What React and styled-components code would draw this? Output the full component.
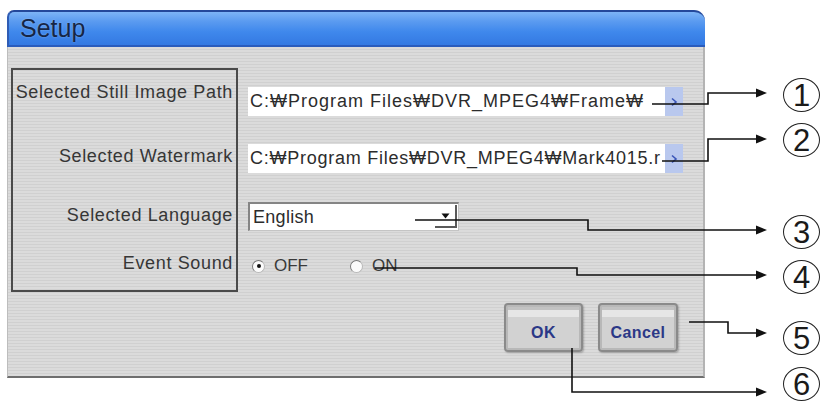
import styled, { createGlobalStyle } from "styled-components";

const GlobalStyle = createGlobalStyle`
  html, body { margin: 0; padding: 0; background: #fff; }
  body {
    width: 831px;
    height: 414px;
    overflow: hidden;
    font-family: "Liberation Sans", Arial, sans-serif;
  }
`;

const Page = styled.div`
  position: relative;
  width: 831px;
  height: 414px;
  box-sizing: border-box;
  padding: 10px 0 0 7px;
`;

const Dialog = styled.div`
  width: 698px;
`;

const TitleBar = styled.div`
  height: 37px;
  box-sizing: border-box;
  display: flex;
  align-items: center;
  padding-left: 11px;
  border-radius: 7px 11px 0 0;
  border-top: 2px solid #24489a;
  border-left: 2px solid #2f5cb4;
  border-bottom: 2px solid #2a5cbc;
  background: linear-gradient(#7db4f6 0%, #5b9bf0 28%, #3f88ec 60%, #3479e2 100%);
  font-size: 25px;
  color: #152646;
  text-shadow: 0 0 2px rgba(255, 255, 255, 0.35);
`;

const Body = styled.div`
  height: 331px;
  box-sizing: border-box;
  padding: 21px 0 0 3px;
  border-left: 1px solid #bdbdbd;
  border-right: 2px solid #b4b4b4;
  border-bottom: 2px solid #6e6e6e;
  background: repeating-linear-gradient(#dbdbdb 0 2px, #d0d0d0 2px 3px);
`;

const Form = styled.div`
  display: flex;
  align-items: flex-start;
  gap: 10px;
`;

const LabelBox = styled.div`
  width: 227px;
  height: 224px;
  box-sizing: border-box;
  border: 2px solid #4a4a4a;
  display: flex;
  flex-direction: column;
  align-items: flex-end;
  padding-right: 3px;
`;

const Label = styled.div`
  margin-top: ${(p) => p.$gap}px;
  font-size: 18px;
  letter-spacing: 0.65px;
  line-height: 22px;
  color: #363636;
  white-space: nowrap;
`;

const Fields = styled.div`
  display: flex;
  flex-direction: column;
`;

const PathField = styled.div`
  margin-top: ${(p) => p.$gap}px;
  width: 435px;
  height: 29px;
  display: flex;
`;

const PathText = styled.div`
  flex: 1;
  background: #fff;
  padding-left: 2px;
  font-size: 18px;
  letter-spacing: ${(p) => p.$spacing}px;
  line-height: 29px;
  color: #2c2c2c;
  white-space: nowrap;
  overflow: hidden;
`;

const Browse = styled.div`
  width: 18px;
  background: #b9c8ee;
  display: flex;
  align-items: center;
  justify-content: center;
`;

const Select = styled.div`
  margin-top: 29px;
  width: 211px;
  height: 29px;
  box-sizing: border-box;
  display: flex;
  background: #fff;
  border-top: 2px solid #858585;
  border-left: 2px solid #858585;
  border-right: 1px solid #c4c4c4;
  border-bottom: 1px solid #c4c4c4;
`;

const SelectText = styled.div`
  flex: 1;
  padding-left: 3px;
  font-size: 18px;
  letter-spacing: 0.3px;
  line-height: 26px;
  color: #2c2c2c;
`;

const SelectButton = styled.div`
  width: 22px;
  box-sizing: border-box;
  margin: 1px 1px 2px 0;
  border-right: 2px solid #5a5a5a;
  border-bottom: 2px solid #5a5a5a;
  display: flex;
  align-items: center;
  justify-content: center;
`;

const RadioRow = styled.div`
  margin-top: 25px;
  height: 20px;
  display: flex;
  align-items: center;
  padding-left: 4px;
  font-size: 17px;
  color: #3a3a3a;
`;

const Radio = styled.span`
  width: 13px;
  height: 13px;
  box-sizing: border-box;
  border-radius: 50%;
  background: #fbfbfb;
  border: 1px solid #b8b8b8;
  border-top-color: #7a7a7a;
  border-left-color: #7a7a7a;
  display: flex;
  align-items: center;
  justify-content: center;
  margin-right: 9px;

  &::after {
    content: "";
    width: 4px;
    height: 4px;
    border-radius: 50%;
    background: ${(p) => (p.$checked ? "#111" : "transparent")};
  }
`;

const Option = styled.span`
  display: flex;
  align-items: center;
  margin-right: 42px;
`;

const ButtonRow = styled.div`
  margin-top: 11px;
  display: flex;
  justify-content: flex-end;
  gap: 15px;
  padding-right: 25px;
`;

const Button = styled.div`
  width: ${(p) => p.$w}px;
  height: 49px;
  box-sizing: border-box;
  border: 2px solid #8a8a8a;
  border-radius: 4px;
  box-shadow: inset 0 0 0 2px #b8b8b8, 1px 1px 2px rgba(0, 0, 0, 0.25);
  background: linear-gradient(#c2c2c2 0 5px, #e6e6e6 5px 12px, #d2d2d2 12px 100%);
  display: flex;
  align-items: center;
  justify-content: center;
  padding-top: 10px;
  font-size: 16px;
  letter-spacing: 0.4px;
  font-weight: bold;
  color: #2b3887;
`;

const Overlay = styled.div`
  position: absolute;
  inset: 0;
  pointer-events: none;
`;

const Callout = styled.div`
  position: absolute;
  left: 783px;
  top: ${(p) => p.$y - 17}px;
  width: 37px;
  height: 34px;
  box-sizing: border-box;
  border: 1.5px solid #222;
  border-radius: 50%;
  display: flex;
  align-items: center;
  justify-content: center;
  font-size: 31px;
  line-height: 1;
  color: #1a1a1a;
  background: #fff;
`;

const lines = [
  { pts: "652,104 708,104 708,93 758,93", y: 93 },
  { pts: "662,161 708,161 708,139 758,139", y: 139 },
  { pts: "415,220 588,220 588,230 758,230", y: 230 },
  { pts: "375,268 577,268 577,275 758,275", y: 275 },
  { pts: "689,322 728,322 728,333 758,333", y: 333 },
  { pts: "572,348 572,392 758,392", y: 392 },
];

const callouts = [
  { n: 1, y: 95 },
  { n: 2, y: 140 },
  { n: 3, y: 232 },
  { n: 4, y: 277 },
  { n: 5, y: 338 },
  { n: 6, y: 384 },
];

const Chevron = () => (
  <svg width="8" height="10" viewBox="0 0 8 10">
    <path d="M2 1.5 L6 5 L2 8.5" fill="none" stroke="#3a55b8" strokeWidth="1.6" />
  </svg>
);

const DownArrow = () => (
  <svg width="9" height="6" viewBox="0 0 9 6">
    <path d="M0.5 0.5 H8.5 L4.5 5.5 Z" fill="#111" />
  </svg>
);

export default function App() {
  return (
    <Page>
      <GlobalStyle />
      <Dialog>
        <TitleBar>Setup</TitleBar>
        <Body>
          <Form>
            <LabelBox>
              <Label $gap={11}>Selected Still Image Path</Label>
              <Label $gap={42}>Selected Watermark</Label>
              <Label $gap={37}>Selected Language</Label>
              <Label $gap={26}>Event Sound</Label>
            </LabelBox>
            <Fields>
              <PathField $gap={19}>
                <PathText $spacing={1}>C:₩Program Files₩DVR_MPEG4₩Frame₩</PathText>
                <Browse>
                  <Chevron />
                </Browse>
              </PathField>
              <PathField $gap={28}>
                <PathText $spacing={0.75}>C:₩Program Files₩DVR_MPEG4₩Mark4015.r</PathText>
                <Browse>
                  <Chevron />
                </Browse>
              </PathField>
              <Select>
                <SelectText>English</SelectText>
                <SelectButton>
                  <DownArrow />
                </SelectButton>
              </Select>
              <RadioRow>
                <Option>
                  <Radio $checked />
                  OFF
                </Option>
                <Option>
                  <Radio />
                  ON
                </Option>
              </RadioRow>
            </Fields>
          </Form>
          <ButtonRow>
            <Button $w={79}>OK</Button>
            <Button $w={80}>Cancel</Button>
          </ButtonRow>
        </Body>
      </Dialog>
      <Overlay>
        <svg width="831" height="414">
          {lines.map((l, i) => (
            <g key={i}>
              <polyline points={l.pts} fill="none" stroke="#111" strokeWidth="1.6" />
              <polygon points={`756,${l.y - 4.5} 767,${l.y} 756,${l.y + 4.5}`} fill="#111" />
            </g>
          ))}
        </svg>
        {callouts.map((c) => (
          <Callout key={c.n} $y={c.y}>
            {c.n}
          </Callout>
        ))}
      </Overlay>
    </Page>
  );
}
